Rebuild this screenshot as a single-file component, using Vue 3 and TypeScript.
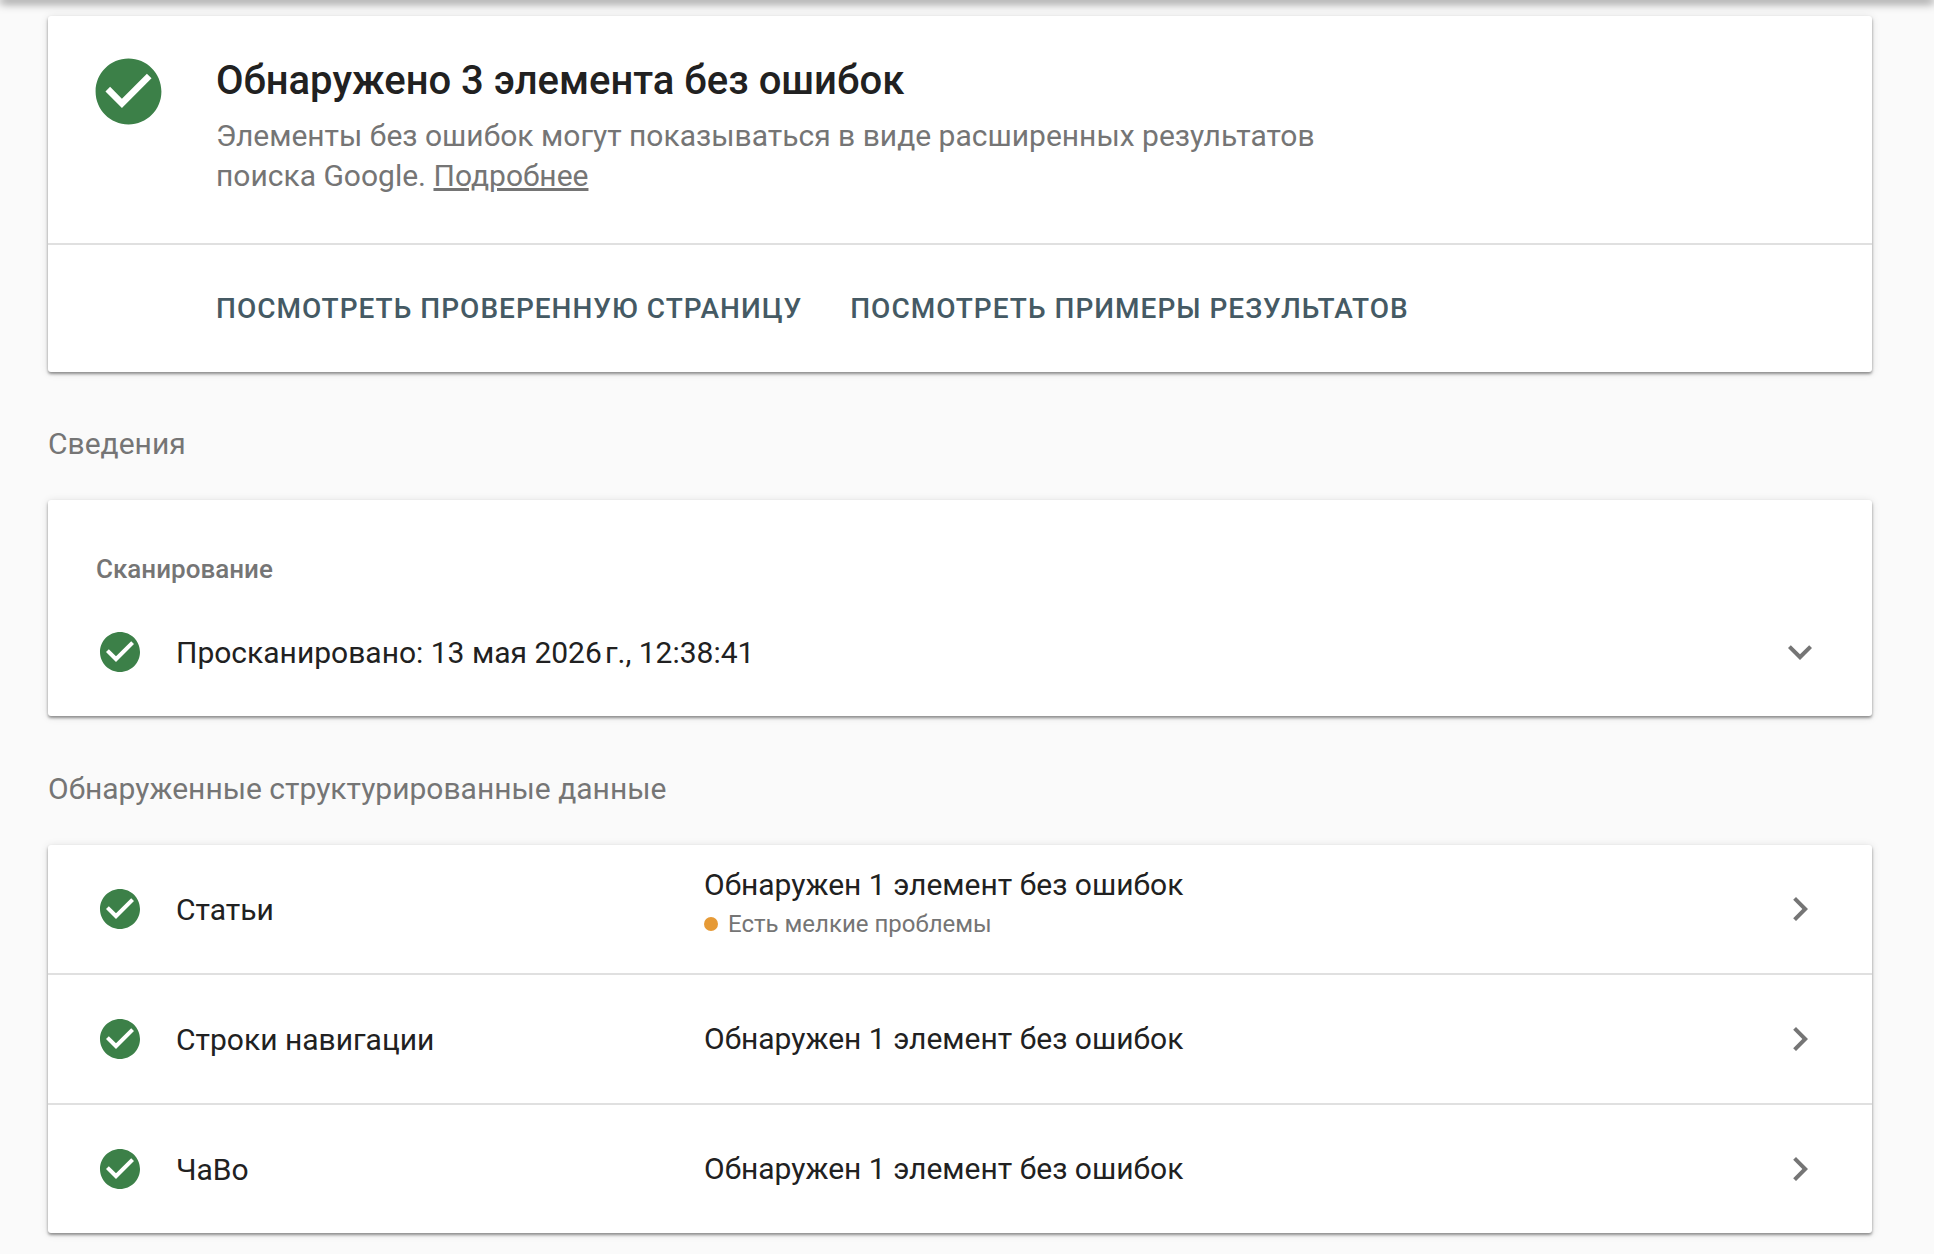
<script setup lang="ts">
interface DataRow {
  name: string
  status: string
  note?: string
}

const rows: DataRow[] = [
  { name: 'Статьи', status: 'Обнаружен 1 элемент без ошибок', note: 'Есть мелкие проблемы' },
  { name: 'Строки навигации', status: 'Обнаружен 1 элемент без ошибок' },
  { name: 'ЧаВо', status: 'Обнаружен 1 элемент без ошибок' },
]

const checkPath =
  'M12 2C6.48 2 2 6.48 2 12s4.48 10 10 10 10-4.48 10-10S17.52 2 12 2zm-2 15l-5-5 1.41-1.41L10 14.17l7.59-7.59L19 8l-9 9z'
</script>

<template>
  <div class="page">
    <div class="topbar"></div>

    <section class="card summary">
      <div class="summary-main">
        <svg class="icon-big" viewBox="0 0 24 24"><circle cx="12" cy="12" r="8" fill="#fff" /><path :d="checkPath" fill="#3c8048" /></svg>
        <div class="summary-text">
          <h1>Обнаружено 3 элемента без ошибок</h1>
          <p>Элементы без ошибок могут показываться в виде расширенных результатов<br />поиска Google. <a href="#">Подробнее</a></p>
        </div>
      </div>
      <div class="summary-actions">
        <button type="button">ПОСМОТРЕТЬ ПРОВЕРЕННУЮ СТРАНИЦУ</button>
        <button type="button">ПОСМОТРЕТЬ ПРИМЕРЫ РЕЗУЛЬТАТОВ</button>
      </div>
    </section>

    <h2>Сведения</h2>

    <section class="card crawl">
      <h3>Сканирование</h3>
      <div class="crawl-row">
        <svg class="icon" viewBox="0 0 24 24"><circle cx="12" cy="12" r="8" fill="#fff" /><path :d="checkPath" fill="#3c8048" /></svg>
        <span class="crawl-text">Просканировано: 13 мая 2026&#8202;г., 12:38:41</span>
        <svg class="chevron" viewBox="0 0 24 24"><path d="M16.59 8.59L12 13.17 7.41 8.59 6 10l6 6 6-6z" /></svg>
      </div>
    </section>

    <h2 class="second">Обнаруженные структурированные данные</h2>

    <section class="card list">
      <div v-for="row in rows" :key="row.name" class="row">
        <svg class="icon" viewBox="0 0 24 24"><circle cx="12" cy="12" r="8" fill="#fff" /><path :d="checkPath" fill="#3c8048" /></svg>
        <span class="row-name">{{ row.name }}</span>
        <div class="row-status">
          <div>{{ row.status }}</div>
          <div v-if="row.note" class="row-note"><i class="dot"></i>{{ row.note }}</div>
        </div>
        <svg class="chevron" viewBox="0 0 24 24"><path d="M10 6L8.59 7.41 13.17 12l-4.58 4.59L10 18l6-6z" /></svg>
      </div>
    </section>
  </div>
</template>

<style>
html,
body {
  margin: 0;
  background: #fafafa;
}
</style>

<style scoped>
.page {
  position: relative;
  box-sizing: border-box;
  width: 1934px;
  height: 1254px;
  padding: 16px 62px 0 48px;
  background: #fafafa;
  font-family: Roboto, "Noto Sans", sans-serif;
  color: #212121;
  overflow: hidden;
}

.topbar {
  position: absolute;
  top: -6px;
  left: 0;
  right: 0;
  height: 6px;
  box-shadow: 0 3px 10px rgba(0, 0, 0, 0.5);
}

.card {
  background: #fff;
  border-radius: 3px;
  box-shadow: 0 2px 3px rgba(0, 0, 0, 0.4), 0 1px 8px rgba(0, 0, 0, 0.12);
}

.summary-main {
  display: flex;
  height: 229px;
  box-sizing: border-box;
  padding: 36px 0 0 41px;
  border-bottom: 2px solid #e0e0e0;
}

.icon-big {
  width: 79px;
  height: 79px;
  flex: none;
}

.summary-text {
  margin: 3px 0 0 48px;
}

h1 {
  margin: 0;
  font-size: 40px;
  line-height: 52px;
  font-weight: 500;
  color: #212121;
}

.summary-text p {
  margin: 9px 0 0;
  font-size: 30px;
  line-height: 40px;
  color: #757575;
}

.summary-text a {
  color: #757575;
}

.summary-actions {
  display: flex;
  align-items: center;
  gap: 48px;
  height: 127px;
  padding-left: 168px;
}

.summary-actions button {
  padding: 0;
  border: none;
  background: none;
  font: 500 28px Roboto, sans-serif;
  letter-spacing: 1px;
  color: #455a64;
}

h2 {
  margin: 0;
  height: 128px;
  font-size: 30px;
  line-height: 144px;
  font-weight: 400;
  color: #757575;
}

h2.second {
  height: 129px;
  line-height: 145px;
}

.crawl {
  height: 216px;
  box-sizing: border-box;
  padding-top: 53px;
}

h3 {
  margin: 0 0 0 48px;
  font-size: 26px;
  line-height: 32px;
  font-weight: 500;
  color: #757575;
}

.crawl-row {
  display: flex;
  align-items: center;
  height: 96px;
  padding: 0 48px;
  margin-top: 19px;
}

.icon {
  width: 48px;
  height: 48px;
  flex: none;
}

.crawl-text {
  flex: 1;
  margin-left: 32px;
  font-size: 30px;
}

.chevron {
  width: 48px;
  height: 48px;
  flex: none;
  fill: #757575;
}

.row {
  display: flex;
  align-items: center;
  height: 130px;
  padding: 0 48px;
  box-sizing: border-box;
  font-size: 30px;
  border-bottom: 2px solid #e0e0e0;
}

.row:last-child {
  border-bottom: none;
  height: 128px;
}

.row-name {
  width: 528px;
  flex: none;
  margin-left: 32px;
}

.row-status {
  flex: 1;
  line-height: 36px;
}

.row-note {
  display: flex;
  align-items: center;
  margin: 6px 0 12px;
  font-size: 24px;
  line-height: 30px;
  color: #757575;
}

.dot {
  width: 14px;
  height: 14px;
  margin-right: 10px;
  border-radius: 50%;
  background: #e69a36;
}
</style>
